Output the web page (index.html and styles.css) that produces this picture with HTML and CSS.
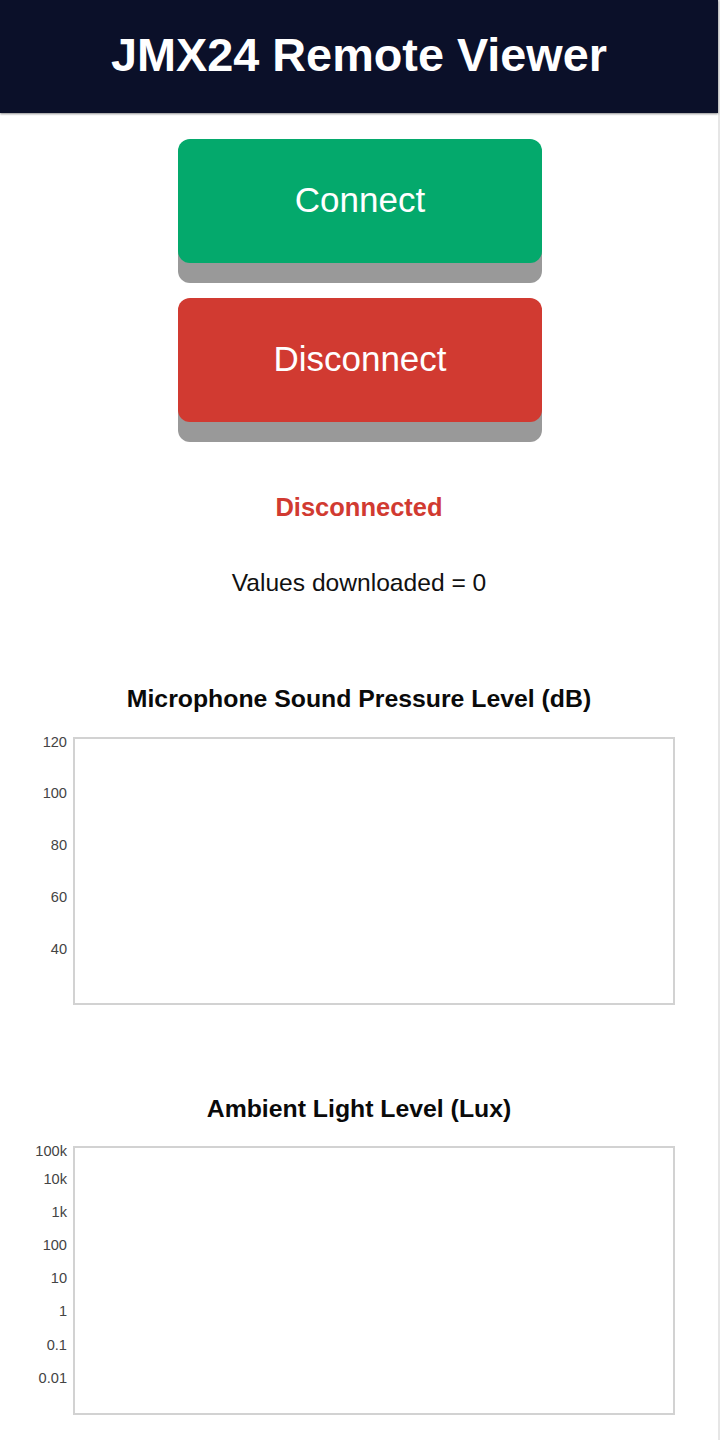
FILE: index.html
```html
<!DOCTYPE html>
<html lang="en">
<head>
<meta charset="utf-8">
<title>JMX24 Remote Viewer</title>
<link rel="stylesheet" href="styles.css">
</head>
<body>
<div class="page">
  <header class="topbar">
    <h1 class="title">JMX24 Remote Viewer</h1>
  </header>
  <main class="content">
    <div class="buttons">
      <button class="btn btn-connect">Connect</button>
      <button class="btn btn-disconnect">Disconnect</button>
    </div>
    <p class="status">Disconnected</p>
    <p class="count">Values downloaded = 0</p>

    <section class="chart chart-spl">
      <h2 class="chart-title">Microphone Sound Pressure Level (dB)</h2>
      <div class="chart-row">
        <div class="axis">
          <span class="tick" style="top:-3px">120</span>
          <span class="tick" style="top:48px">100</span>
          <span class="tick" style="top:100px">80</span>
          <span class="tick" style="top:152px">60</span>
          <span class="tick" style="top:204px">40</span>
        </div>
        <div class="plot"></div>
      </div>
    </section>

    <section class="chart chart-lux">
      <h2 class="chart-title">Ambient Light Level (Lux)</h2>
      <div class="chart-row">
        <div class="axis">
          <span class="tick" style="top:-3px">100k</span>
          <span class="tick" style="top:25px">10k</span>
          <span class="tick" style="top:58px">1k</span>
          <span class="tick" style="top:91px">100</span>
          <span class="tick" style="top:124px">10</span>
          <span class="tick" style="top:157px">1</span>
          <span class="tick" style="top:191px">0.1</span>
          <span class="tick" style="top:224px">0.01</span>
        </div>
        <div class="plot"></div>
      </div>
    </section>
  </main>
</div>
</body>
</html>
```

FILE: styles.css
```css
html, body {
  margin: 0;
  padding: 0;
  background: #ffffff;
}

body {
  font-family: "Liberation Sans", Arial, sans-serif;
  color: #111111;
}

.page {
  width: 718px;
  min-height: 1440px;
  border-right: 2px solid #e6e6e6;
  box-sizing: content-box;
}

.topbar {
  height: 113px;
  background: #0b1029;
  display: flex;
  align-items: center;
  justify-content: center;
  box-shadow: 0 1px 2px rgba(0, 0, 0, 0.45);
}

.title {
  margin: 0;
  color: #ffffff;
  font-size: 46.8px;
  font-weight: bold;
  line-height: 1;
  padding-bottom: 2px;
}

.content {
  display: flex;
  flex-direction: column;
  align-items: center;
}

.buttons {
  margin-top: 26px;
  margin-left: 2px;
  display: flex;
  flex-direction: column;
  gap: 35px;
}

.btn {
  width: 364px;
  height: 124px;
  border: none;
  border-radius: 12px;
  color: #ffffff;
  font-family: "Liberation Sans", Arial, sans-serif;
  font-size: 35px;
  padding: 0 0 2px 0;
  box-shadow: 0 20px 0 #999999;
  cursor: pointer;
}

.btn-connect {
  background: #04a96c;
}

.btn-disconnect {
  background: #d13a31;
}

.status {
  margin: 70px 0 0 0;
  line-height: 30px;
  font-size: 25.5px;
  font-weight: bold;
  color: #d13a31;
}

.count {
  margin: 46px 0 0 0;
  line-height: 30px;
  font-size: 24.6px;
  color: #111111;
}

.chart {
  width: 718px;
  display: flex;
  flex-direction: column;
  align-items: center;
}

.chart-spl {
  margin-top: 86px;
}

.chart-lux {
  margin-top: 89px;
}

.chart-title {
  margin: 0;
  line-height: 30px;
  font-size: 24.8px;
  font-weight: bold;
  color: #0a0a0a;
}

.chart-row {
  align-self: stretch;
  display: flex;
  margin-top: 23px;
}

.chart-lux .chart-row {
  margin-top: 22px;
}

.axis {
  position: relative;
  width: 73px;
  flex: none;
}

.tick {
  position: absolute;
  right: 6px;
  line-height: 16px;
  font-size: 14.6px;
  color: #444444;
}

.plot {
  width: 602px;
  height: 268px;
  box-sizing: border-box;
  border: 2px solid #d2d2d2;
  background: #ffffff;
}

.chart-lux .plot {
  height: 269px;
}
```
